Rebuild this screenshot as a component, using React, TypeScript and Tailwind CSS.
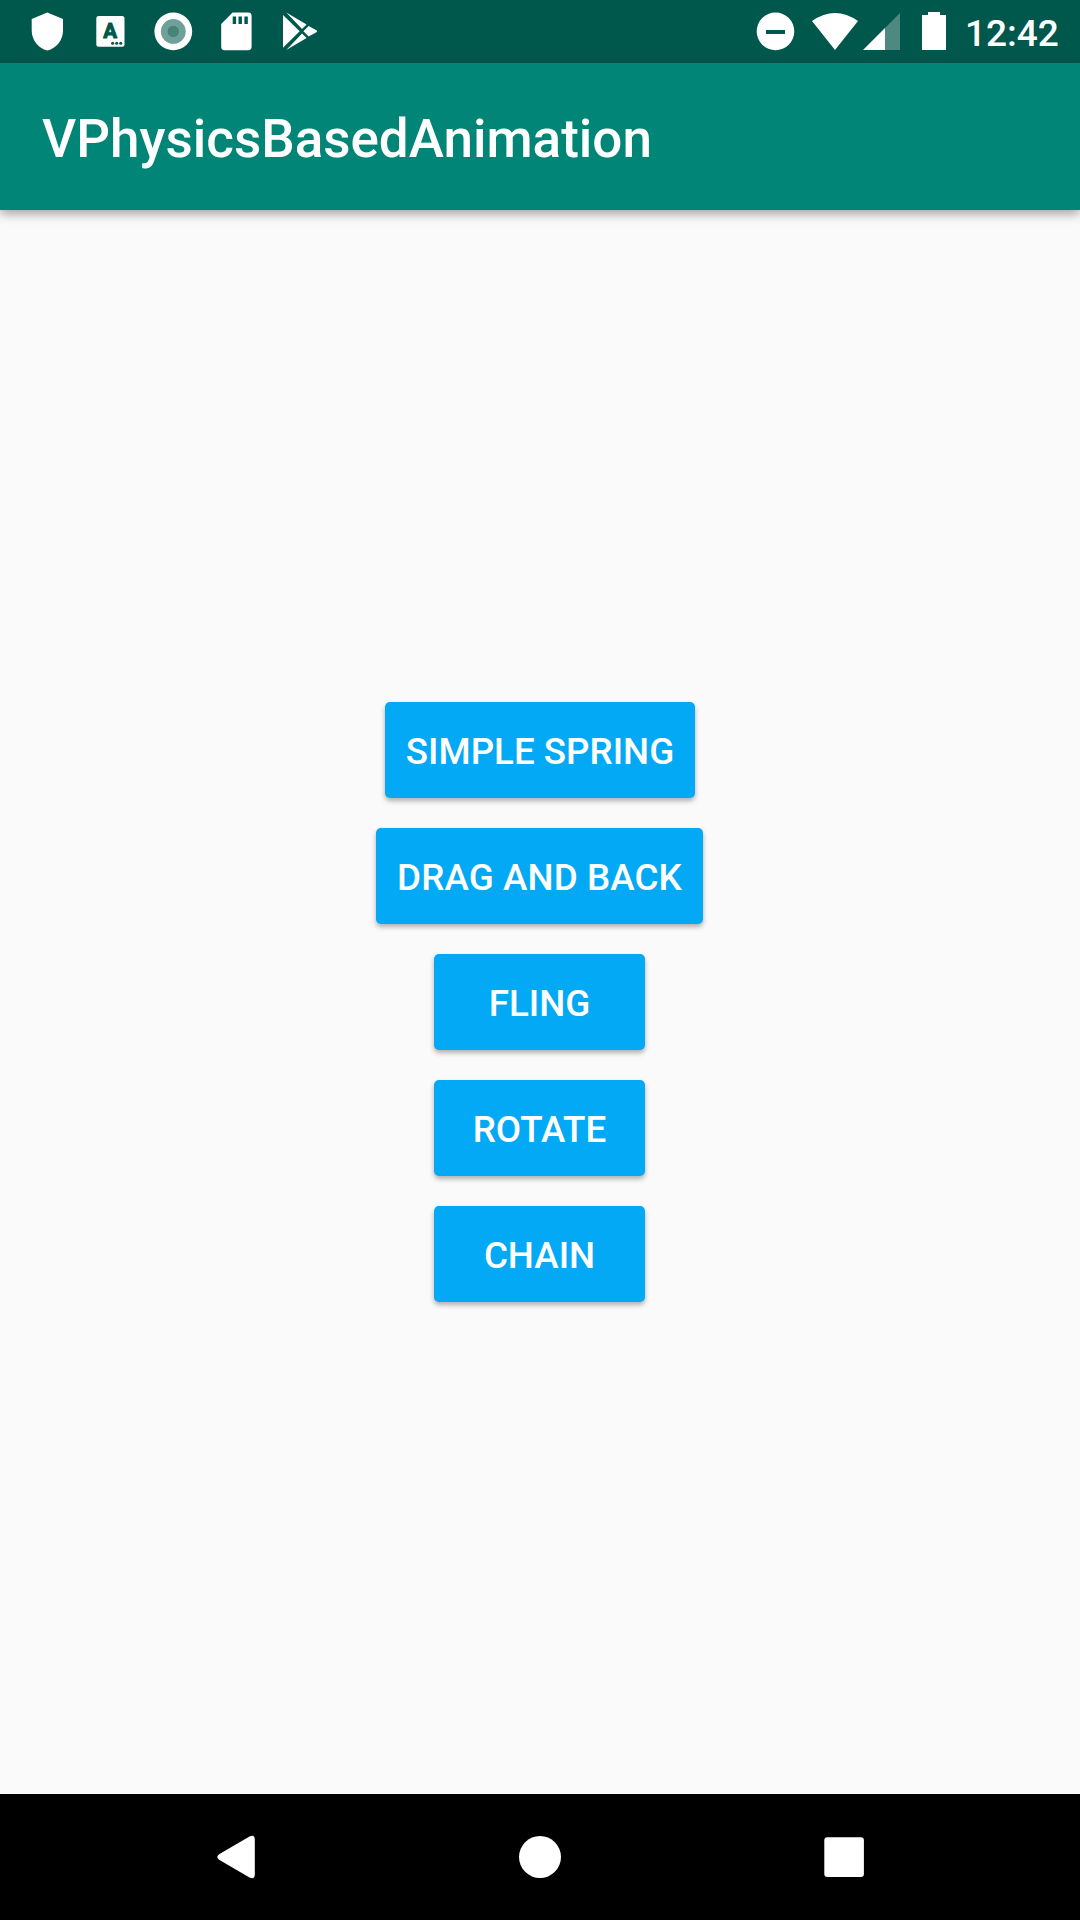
import type { ReactNode } from "react";

function StatusIcon({ children }: { children: ReactNode }) {
  return (
    <svg className="h-[63px] w-[63px] shrink-0" viewBox="0 0 63 63" fill="#fff">
      {children}
    </svg>
  );
}

function StatusBar() {
  return (
    <div className="flex h-[63px] shrink-0 items-center justify-between bg-[#00574b] pl-4 pr-[21px]">
      <div className="flex">
        <StatusIcon>
          <path d="M31.3 12.4 47 19V30.5C47 40 40.5 48.3 31.3 50.5 22.2 48.3 15.7 40 15.7 30.5V19Z" />
        </StatusIcon>
        <StatusIcon>
          <rect x="17.3" y="16" width="28.2" height="30.8" rx="2.5" />
          <text
            x="31.2"
            y="38.1"
            textAnchor="middle"
            fill="#00574b"
            stroke="#00574b"
            strokeWidth="1"
            strokeLinejoin="round"
            className="text-[20.5px] font-bold"
          >
            A
          </text>
          <g fill="#00574b">
            <circle cx="33.6" cy="43.2" r="1.5" />
            <circle cx="37.7" cy="43.2" r="1.5" />
            <circle cx="41.7" cy="43.2" r="1.5" />
          </g>
        </StatusIcon>
        <StatusIcon>
          <circle cx="31.3" cy="31.4" r="18.9" />
          <circle cx="31.3" cy="31.4" r="12.4" fill="#6fa19a" />
          <circle cx="31.3" cy="31.4" r="5.7" fill="#448479" />
        </StatusIcon>
        <StatusIcon>
          <path d="M27.6 12.5H43.2A3.4 3.4 0 0 1 46.6 15.9V46.8A3.4 3.4 0 0 1 43.2 50.2H19.6A3.4 3.4 0 0 1 16.2 46.8V24Z" />
          <path d="M27.7 16.4h3.4V24h-3.4zM33.5 16.4h3.4V24h-3.4zM39.4 16.4h3.4V24h-3.4z" fill="#00574b" />
        </StatusIcon>
        <StatusIcon>
          <path d="M15 15 31.7 31.2 15 47.7ZM18.3 12.6 38.6 24.5 34 29ZM18.3 50 34 33.5 38.6 38ZM40.6 26 48.4 30.2Q50 31.2 48.4 32.2L40.6 36.6 35.4 31.2Z" />
        </StatusIcon>
      </div>
      <div className="flex items-center">
        <svg className="h-[63px] w-[40px]" viewBox="755 0 40 63" fill="#fff">
          <circle cx="775.5" cy="31.4" r="18.8" />
          <path d="M766 30h19v4h-19z" fill="#00574b" />
        </svg>
        <svg className="h-[63px] w-[66px]" viewBox="795 0 66 63" fill="#fff">
          <path d="M812 21Q835 5 858 21L835 50Z" />
        </svg>
        <svg className="h-[63px] w-[50px]" viewBox="861 0 50 63" fill="#fff">
          <path d="M885 28 900 13V50H885Z" fillOpacity=".3" />
          <path d="M863 50 885 28V50Z" />
        </svg>
        <svg className="h-[63px] w-[54px]" viewBox="911 0 54 63" fill="#fff">
          <path d="M922 15H928V12H940V15H946V50H922Z" />
        </svg>
        <span className="w-[94px] whitespace-nowrap pt-[4px] text-[37px] leading-[43px] font-medium">12:42</span>
      </div>
    </div>
  );
}

const actions = [
  { label: "SIMPLE SPRING", size: "w-[310px]" },
  { label: "DRAG AND BACK", size: "mr-px w-[327px] tracking-[0.1px]" },
  { label: "FLING", size: "mr-px w-[211px]" },
  { label: "ROTATE", size: "mr-px w-[211px]" },
  { label: "CHAIN", size: "mr-px w-[211px]" },
];

export default function App() {
  return (
    <div className="flex h-[1920px] w-[1080px] flex-col overflow-hidden bg-[#fafafa] font-['Roboto',sans-serif] text-white">
      <StatusBar />
      <header className="flex h-[147px] shrink-0 items-center bg-[#008577] px-[42px] pt-[4px] shadow-[0_4px_10px_rgba(0,0,0,0.35)]">
        <h1 className="text-[53px] leading-[62px] font-medium">VPhysicsBasedAnimation</h1>
      </header>
      <main className="flex flex-1 flex-col items-center gap-[30px] pt-[492px]">
        {actions.map((a) => (
          <button
            key={a.label}
            className={`${a.size} h-24 shrink-0 rounded-[5px] bg-[#03a9f4] pt-[2px] text-[36.75px] leading-[43px] font-medium whitespace-nowrap shadow-[0_3px_5px_rgba(0,0,0,0.3)]`}
          >
            {a.label}
          </button>
        ))}
      </main>
      <nav className="flex h-[126px] shrink-0 items-center justify-center bg-black">
        <svg className="h-[126px] w-[304px]" viewBox="84 0 304 126" fill="#fff">
          <path d="M249.5 42.5Q254.8 40 254.8 45.5V80.5Q254.8 86 249.5 83.5L219.5 66Q215 63 219.5 60Z" />
        </svg>
        <svg className="h-[126px] w-[304px]" viewBox="388 0 304 126" fill="#fff">
          <circle cx="540" cy="63" r="21" />
        </svg>
        <svg className="h-[126px] w-[304px]" viewBox="692 0 304 126" fill="#fff">
          <rect x="824.3" y="43.3" width="39.6" height="39.6" rx="3" />
        </svg>
      </nav>
    </div>
  );
}
